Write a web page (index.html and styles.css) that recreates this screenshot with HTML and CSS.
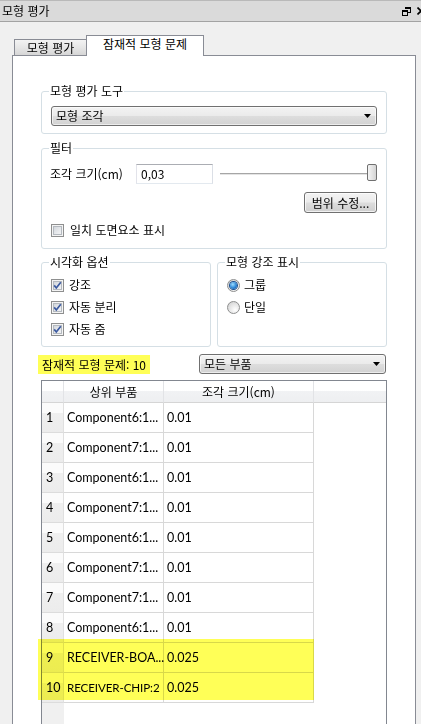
FILE: index.html
```html
<!DOCTYPE html>
<html lang="ko">
<head>
<meta charset="utf-8">
<title>모형 평가</title>
<link rel="stylesheet" href="styles.css">
</head>
<body>
<div class="titlebar">
  <span class="title">모형 평가</span>
  <span class="tb-icons">
    <svg class="ico-restore" width="9" height="9" viewBox="0 0 9 9">
      <rect x="3" y="0" width="6" height="2" fill="#000"/>
      <rect x="8" y="0" width="1" height="6" fill="#000"/>
      <rect x="6" y="5" width="3" height="1" fill="#000"/>
      <rect x="0" y="3" width="6" height="2" fill="#000"/>
      <rect x="0" y="3" width="1" height="6" fill="#000"/>
      <rect x="5" y="3" width="1" height="6" fill="#000"/>
      <rect x="0" y="8" width="6" height="1" fill="#000"/>
    </svg>
    <svg class="ico-close" width="8" height="8" viewBox="0 0 8 8">
      <path d="M0.5 0.5 L7.5 7.5 M7.5 0.5 L0.5 7.5" stroke="#000" stroke-width="1.6" fill="none"/>
    </svg>
  </span>
</div>

<div class="tabs">
  <div class="tab">모형 평가</div>
  <div class="tab active">잠재적 모형 문제</div>
</div>

<div class="panel">
  <fieldset class="group g-tool">
    <legend>모형 평가 도구</legend>
    <div class="combo"><span>모형 조각</span>
      <svg class="arrow" width="7" height="4" viewBox="0 0 7 4"><path d="M0 0h7L3.5 4z" fill="#000"/></svg>
    </div>
  </fieldset>

  <fieldset class="group g-filter">
    <legend>필터</legend>
    <div class="size-row">
      <span class="lbl">조각 크기(cm)</span>
      <div class="input">0,03</div>
      <div class="slider"><div class="track"></div><div class="thumb"></div></div>
    </div>
    <div class="btn-row"><div class="button">범위 수정...</div></div>
    <div class="check-row"><span class="box"></span><span>일치 도면요소 표시</span></div>
  </fieldset>

  <div class="split">
    <fieldset class="group g-half">
      <legend>시각화 옵션</legend>
      <div class="opt"><span class="box"><svg width="11" height="11" viewBox="0 0 11 11"><path d="M2.2 5.4 L4.3 8 L8.8 2.2" stroke="#3b5aa0" stroke-width="1.7" fill="none"/></svg></span><span>강조</span></div>
      <div class="opt"><span class="box"><svg width="11" height="11" viewBox="0 0 11 11"><path d="M2.2 5.4 L4.3 8 L8.8 2.2" stroke="#3b5aa0" stroke-width="1.7" fill="none"/></svg></span><span>자동 분리</span></div>
      <div class="opt"><span class="box"><svg width="11" height="11" viewBox="0 0 11 11"><path d="M2.2 5.4 L4.3 8 L8.8 2.2" stroke="#3b5aa0" stroke-width="1.7" fill="none"/></svg></span><span>자동 줌</span></div>
    </fieldset>
    <fieldset class="group g-half g-radio">
      <legend>모형 강조 표시</legend>
      <div class="opt"><span class="radio on"></span><span>그룹</span></div>
      <div class="opt"><span class="radio"></span><span>단일</span></div>
    </fieldset>
  </div>

  <div class="result-row">
    <span class="count">잠재적 모형 문제: 10</span>
    <div class="combo combo-parts"><span>모든 부품</span>
      <svg class="arrow" width="7" height="4" viewBox="0 0 7 4"><path d="M0 0h7L3.5 4z" fill="#000"/></svg>
    </div>
  </div>

  <div class="table">
    <div class="th corner"></div>
    <div class="th">상위 부품</div>
    <div class="th">조각 크기(cm)</div>
    <div class="th last"></div>

    <div class="rn">1</div><div class="td">Component6:1...</div><div class="td">0.01</div><div class="empty"></div>
    <div class="rn">2</div><div class="td">Component7:1...</div><div class="td">0.01</div><div class="empty"></div>
    <div class="rn">3</div><div class="td">Component6:1...</div><div class="td">0.01</div><div class="empty"></div>
    <div class="rn">4</div><div class="td">Component7:1...</div><div class="td">0.01</div><div class="empty"></div>
    <div class="rn">5</div><div class="td">Component6:1...</div><div class="td">0.01</div><div class="empty"></div>
    <div class="rn">6</div><div class="td">Component7:1...</div><div class="td">0.01</div><div class="empty"></div>
    <div class="rn">7</div><div class="td">Component7:1...</div><div class="td">0.01</div><div class="empty"></div>
    <div class="rn">8</div><div class="td">Component6:1...</div><div class="td">0.01</div><div class="empty"></div>
    <div class="rn">9</div><div class="td">RECEIVER-BOA...</div><div class="td">0.025</div><div class="empty"></div>
    <div class="rn">10</div><div class="td caps">RECEIVER-CHIP:2</div><div class="td">0.025</div><div class="empty"></div>

    <div class="rn-fill"></div><div class="fill"></div>
    <div class="hl"></div>
  </div>
</div>
</body>
</html>
```

FILE: styles.css
```css
* { box-sizing: border-box; }
html, body { margin: 0; padding: 0; }
body {
  width: 421px;
  height: 724px;
  overflow: hidden;
  background: #f0f0f0;
  font-family: "Noto Sans CJK KR", "Noto Sans", sans-serif;
  font-size: 12px;
  line-height: 14px;
  color: #000;
}

/* title bar */
.titlebar {
  height: 22px;
  display: flex;
  align-items: center;
  background: #dadada;
  border-top: 1px solid #b9b9b9;
  border-bottom: 1px solid #a3a3a3;
  padding-left: 2px;
  overflow: hidden;
}
.title { margin-top: -1px; }
.tb-icons {
  margin-left: auto;
  display: flex;
  align-items: center;
  gap: 6px;
  margin-right: -4px;
}
.tb-icons svg { display: block; flex-shrink: 0; }

/* tabs */
.tabs {
  display: flex;
  align-items: flex-end;
  height: 20px;
  margin: 13px 0 0 14px;
}
.tab {
  width: 72px;
  height: 16px;
  border: 1px solid #898c95;
  border-right: none;
  border-bottom: none;
  background: linear-gradient(#f3f3f3, #e6e6e6 50%, #d6d6d6);
  text-align: center;
  line-height: 15px;
}
.tab.active {
  width: 118px;
  height: 21px;
  border-right: 1px solid #898c95;
  background: #fff;
  line-height: 16px;
  margin-bottom: -1px;
  position: relative;
  z-index: 1;
}

/* panel */
.panel {
  margin-left: 12px;
  width: 404px;
  height: 669px;
  overflow: hidden;
  background: #fff;
  border: 1px solid #898c95;
  border-bottom: none;
  padding: 0 28px;
}

/* group boxes */
.group {
  margin: 0;
  border: 1px solid #d5dfe5;
  border-radius: 3px;
  min-width: 0;
}
.group legend {
  padding: 0 1px;
  margin-left: -2px;
  line-height: 14px;
}
.g-tool {
  margin-top: 28px;
  padding: 8px 9px 7px 9px;
}
.g-filter {
  margin-top: 7px;
  padding: 9px 9px 11px 9px;
}

/* combo box */
.combo {
  height: 20px;
  display: flex;
  align-items: center;
  justify-content: space-between;
  padding: 0 5px 0 4px;
  border: 1px solid #707070;
  border-radius: 3px;
  background: linear-gradient(#f3f3f3, #ebebeb 48%, #dddddd 52%, #d2d2d2);
  box-shadow: inset 0 0 0 1px rgba(255,255,255,0.6);
}
.combo .arrow { display: block; }

/* filter row */
.size-row {
  display: flex;
  align-items: center;
  height: 20px;
}
.lbl { width: 86px; margin-left: -1px; }
.input {
  width: 77px;
  height: 20px;
  border: 1px solid;
  border-color: #abadb3 #dbdfe6 #e3e9ef #e2e3ea;
  padding-left: 4px;
  line-height: 18px;
}
.slider {
  flex: 1;
  display: flex;
  align-items: center;
  margin-left: 7px;
  height: 20px;
}
.track {
  flex: 1;
  height: 3px;
  border-top: 1px solid #a6a6a6;
  border-bottom: 1px solid #ffffff;
  background: #e4e4e4;
}
.thumb {
  width: 10px;
  height: 17px;
  margin-top: -3px;
  border: 1px solid #707070;
  border-radius: 2px;
  background: linear-gradient(90deg, #f4f4f4, #e4e4e4 50%, #d4d4d4);
}
.btn-row {
  display: flex;
  justify-content: flex-end;
  margin-top: 8px;
}
.button {
  width: 73px;
  height: 21px;
  border: 1px solid #707070;
  border-radius: 3px;
  background: linear-gradient(#f3f3f3, #ebebeb 48%, #dddddd 52%, #cfcfcf);
  box-shadow: inset 0 0 0 1px rgba(255,255,255,0.7);
  text-align: center;
  line-height: 19px;
}
.check-row {
  display: flex;
  align-items: center;
  gap: 6px;
  margin-top: 10px;
  height: 14px;
}

/* checkbox / radio */
.box {
  width: 13px;
  height: 13px;
  flex-shrink: 0;
  border: 1px solid #8e8f8f;
  background: linear-gradient(135deg, #c9ced4, #e9ebee 60%, #f7f7f7);
  box-shadow: inset 0 0 0 1px #f4f4f4, inset 0 0 0 2px #b4b9bf;
}
.box svg { display: block; }
.radio {
  width: 13px;
  height: 13px;
  flex-shrink: 0;
  border-radius: 50%;
  border: 1px solid #8e8f8f;
  background: radial-gradient(circle at 65% 70%, #ffffff, #e4e4e4 55%, #c9c9c9);
  display: flex;
  align-items: center;
  justify-content: center;
}
.radio.on::after {
  content: "";
  width: 7px;
  height: 7px;
  border-radius: 50%;
  background: radial-gradient(circle at 40% 35%, #9ddcff, #2b86d6 55%, #0f4590);
  box-shadow: 0 0 0 1px #1c4f8e;
}

.split {
  display: flex;
  gap: 6px;
  margin-top: 6px;
}
.g-half {
  flex: 1;
  padding: 5px 9px 6px 9px;
}
.opt {
  display: flex;
  align-items: center;
  gap: 5px;
  height: 22px;
}
.g-radio .opt { gap: 4px; }

/* result row */
.result-row {
  display: flex;
  align-items: center;
  justify-content: space-between;
  margin-top: 7px;
  height: 20px;
}
.count {
  margin-left: -3px;
  padding: 0 4px;
  height: 19px;
  line-height: 19px;
  background: #ffff57;
}
.combo-parts { width: 187px; margin-right: 1px; }

/* table */
.table {
  position: relative;
  margin-top: 6px;
  border: 1px solid #828790;
  border-bottom: none;
  display: grid;
  grid-template-columns: 22px 100px 150px 72px;
  font-family: "Lato", "Noto Sans", sans-serif;
  font-size: 12.5px;
}
.th {
  height: 22px;
  display: flex;
  align-items: center;
  justify-content: center;
  border-right: 1px solid #e2e3e6;
  border-bottom: 1px solid #d5d5d5;
  background: linear-gradient(#ffffff, #ffffff 45%, #f1f2f4 50%, #eeeff1);
  font-family: "Noto Sans CJK KR", "Noto Sans", sans-serif;
  font-size: 12px;
}
.th.last { border-right: none; }
.rn {
  height: 30px;
  display: flex;
  align-items: center;
  padding-left: 4px;
  border-right: 1px solid #e0e0e0;
  border-bottom: 1px solid #dcdcdc;
  background: linear-gradient(#fbfbfb, #fbfbfb 33%, #efefef 33%, #ececec);
}
.td {
  height: 30px;
  display: flex;
  align-items: center;
  padding-left: 3px;
  border-right: 1px solid #d8d8d8;
  border-bottom: 1px solid #d8d8d8;
  white-space: nowrap;
}
.td.caps { font-size: 11.6px; letter-spacing: -0.1px; }
.empty { height: 30px; background: #fff; }
.rn-fill { height: 22px; background: #f0f0f0; }
.fill { grid-column: 2 / 5; background: #fff; }
.hl {
  position: absolute;
  left: -4px;
  top: 258px;
  width: 276px;
  height: 61px;
  background: #ffff57;
  mix-blend-mode: multiply;
}
```
